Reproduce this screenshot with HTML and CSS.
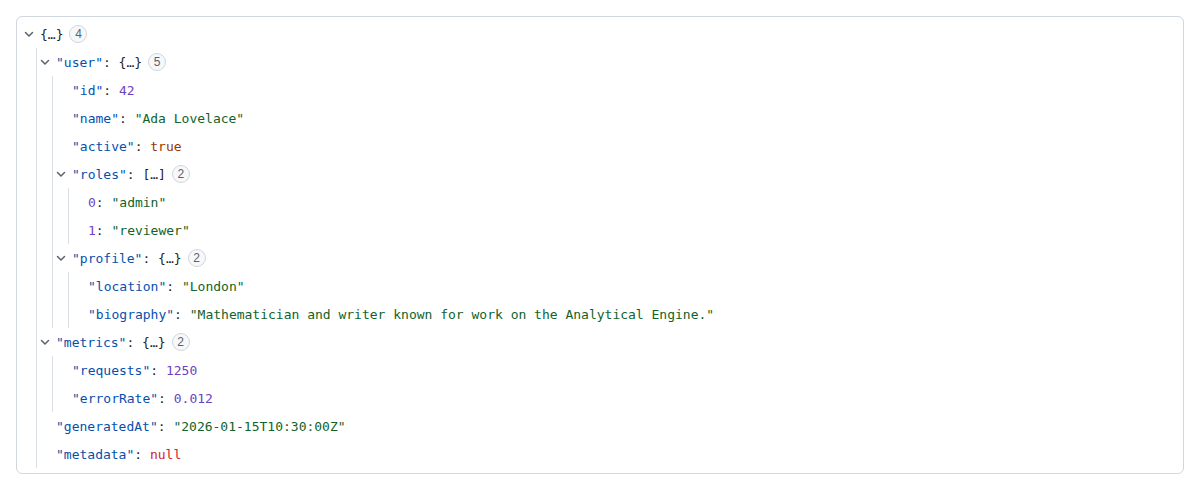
FILE: index.html
```html
<!DOCTYPE html>
<html>
<head>
<meta charset="utf-8">
<link rel="stylesheet" href="styles.css">
</head>
<body>
<div class="viewer">
  <div class="row"><span class="tg"><svg viewBox="0 0 16 16"><path d="M4.5 6.5 8 10l3.5-3.5"/></svg></span><span class="p">{…}</span><span class="badge">4</span></div>
  <div class="kids kids-root">
    <div class="row"><span class="tg"><svg viewBox="0 0 16 16"><path d="M4.5 6.5 8 10l3.5-3.5"/></svg></span><span class="k">"user"</span><span class="p">: {…}</span><span class="badge">5</span></div>
    <div class="kids">
      <div class="row"><span class="tg"></span><span class="k">"id"</span><span class="p">: </span><span class="n">42</span></div>
      <div class="row"><span class="tg"></span><span class="k">"name"</span><span class="p">: </span><span class="s">"Ada Lovelace"</span></div>
      <div class="row"><span class="tg"></span><span class="k">"active"</span><span class="p">: </span><span class="b">true</span></div>
      <div class="row"><span class="tg"><svg viewBox="0 0 16 16"><path d="M4.5 6.5 8 10l3.5-3.5"/></svg></span><span class="k">"roles"</span><span class="p">: […]</span><span class="badge">2</span></div>
      <div class="kids">
        <div class="row"><span class="tg"></span><span class="n">0</span><span class="p">: </span><span class="s">"admin"</span></div>
        <div class="row"><span class="tg"></span><span class="n">1</span><span class="p">: </span><span class="s">"reviewer"</span></div>
      </div>
      <div class="row"><span class="tg"><svg viewBox="0 0 16 16"><path d="M4.5 6.5 8 10l3.5-3.5"/></svg></span><span class="k">"profile"</span><span class="p">: {…}</span><span class="badge">2</span></div>
      <div class="kids">
        <div class="row"><span class="tg"></span><span class="k">"location"</span><span class="p">: </span><span class="s">"London"</span></div>
        <div class="row"><span class="tg"></span><span class="k">"biography"</span><span class="p">: </span><span class="s">"Mathematician and writer known for work on the Analytical Engine."</span></div>
      </div>
    </div>
    <div class="row"><span class="tg"><svg viewBox="0 0 16 16"><path d="M4.5 6.5 8 10l3.5-3.5"/></svg></span><span class="k">"metrics"</span><span class="p">: {…}</span><span class="badge">2</span></div>
    <div class="kids">
      <div class="row"><span class="tg"></span><span class="k">"requests"</span><span class="p">: </span><span class="n">1250</span></div>
      <div class="row"><span class="tg"></span><span class="k">"errorRate"</span><span class="p">: </span><span class="n">0.012</span></div>
    </div>
    <div class="row"><span class="tg"></span><span class="k">"generatedAt"</span><span class="p">: </span><span class="s">"2026-01-15T10:30:00Z"</span></div>
    <div class="row"><span class="tg"></span><span class="k">"metadata"</span><span class="p">: </span><span class="z">null</span></div>
  </div>
</div>
</body>
</html>
```

FILE: styles.css
```css
* { box-sizing: border-box; }
html, body { margin: 0; padding: 0; background: #ffffff; }
body { padding: 16px; }
.viewer {
  border: 1px solid #d0d7de;
  border-radius: 6px;
  padding: 3px 4px 5px 4px;
  font-family: "DejaVu Sans Mono", "Liberation Mono", monospace;
  font-size: 13px;
  color: #1f2328;
  min-height: 458px;
}
.row {
  display: flex;
  align-items: center;
  height: 28px;
  white-space: pre;
}
.tg {
  width: 16px;
  height: 16px;
  flex: 0 0 16px;
  margin-right: 3px;
  display: flex;
  align-items: center;
  justify-content: center;
}
.tg svg {
  width: 16px;
  height: 16px;
  fill: none;
  stroke: #59636e;
  stroke-width: 1.5;
  stroke-linecap: round;
  stroke-linejoin: round;
}
.kids {
  margin-left: 15px;
  border-left: 1px solid #d8dee4;
}
.k { color: #0550ae; }
.p { color: #1f2328; }
.s { color: #116329; }
.n { color: #6f42c1; }
.b { color: #953800; }
.z { color: #cf222e; }
.badge {
  margin-left: 6px;
  width: 18px;
  height: 18px;
  border-radius: 50%;
  border: 1px solid #d0d7de;
  background: #f6f8fa;
  color: #59636e;
  font-family: "Liberation Sans", Arial, sans-serif;
  font-size: 12px;
  display: flex;
  align-items: center;
  justify-content: center;
}
```
